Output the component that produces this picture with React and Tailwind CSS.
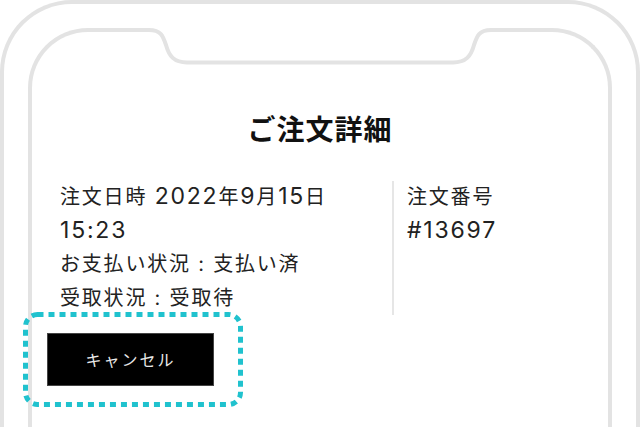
import React from 'react';

const FONT = { fontFamily: 'Inter, "Noto Sans CJK JP", sans-serif' };

// notch drawn over the inner frame's top edge
const Notch = () => (
  <svg
    className="absolute left-[108px] top-[-6px]"
    width="360"
    height="42"
    viewBox="0 0 360 42"
  >
    <rect x="8" y="0" width="344" height="10" fill="#ffffff" />
    <path
      d="M0 4 H9 C21 4 23 10 26 19 C29 30 34 36.5 47 36.5 H313 C326 36.5 331 30 334 19 C337 10 339 4 351 4 H360"
      fill="none"
      stroke="#e3e3e3"
      strokeWidth="4"
    />
  </svg>
);

const FocusRing = () => (
  <svg
    className="absolute left-[-24px] top-[-21px] pointer-events-none"
    width="220"
    height="95"
    viewBox="0 0 220 95"
  >
    <rect
      x="2.5"
      y="2.5"
      width="215"
      height="90"
      rx="12"
      fill="none"
      stroke="#20c2ce"
      strokeWidth="5"
      strokeDasharray="6 5"
    />
  </svg>
);

const Num = ({ children }) => (
  <span className="text-[23px] leading-none tracking-[1.8px]">{children}</span>
);

export default function App() {
  return (
    <div className="w-[640px] h-[427px] overflow-hidden bg-white" style={FONT}>
      {/* outer phone frame */}
      <div className="h-[470px] border-[4px] border-b-0 border-[#e3e3e3] rounded-t-[72px] pt-[24px] px-[24px]">
        {/* inner screen */}
        <div className="relative h-[460px] border-[4px] border-b-0 border-[#e3e3e3] rounded-t-[60px]">
          <Notch />

          <div className="pt-[80px]">
            <h1 className="text-center text-[28px] leading-[36px] font-bold tracking-[1px] text-[#111]">
              ご注文詳細
            </h1>

            <div className="mt-[33px] flex text-[20px] leading-[33.5px] tracking-[1.8px] text-[#222]">
              <div className="w-[360px] pl-[28px]">
                <p>
                  注文日時 <Num>2022</Num>年<Num>9</Num>月<Num>15</Num>日
                  <br />
                  <Num>15:23</Num>
                </p>
                <p>お支払い状況 : 支払い済</p>
                <p>受取状況 : 受取待</p>
              </div>
              <div className="w-[2px] bg-[#e6e6e6]" />
              <div className="pl-[13px]">
                <p>注文番号</p>
                <p>
                  <Num>#13697</Num>
                </p>
              </div>
            </div>

            <div className="relative mt-[18px] ml-[15px] w-[167px]">
              <button className="w-[167px] h-[53px] bg-black border border-[#444] text-[16px] tracking-[2px] text-[#e8e8e8]">
                キャンセル
              </button>
              <FocusRing />
            </div>
          </div>
        </div>
      </div>
    </div>
  );
}
